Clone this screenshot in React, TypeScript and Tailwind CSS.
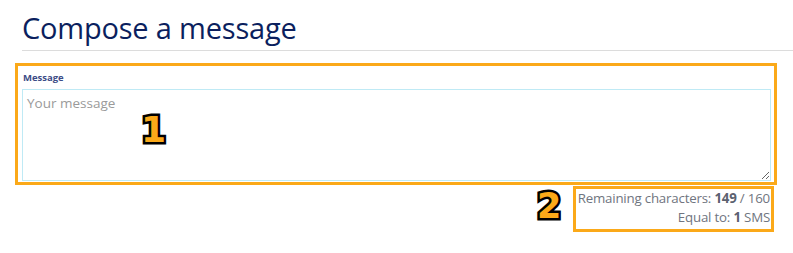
import React from "react";

export default function App() {
  return (
    <div className="relative w-[793px] h-[253px] bg-white font-['Open_Sans',sans-serif] overflow-hidden">
      <div className="pl-[15px] pr-[16px]">
        <div className="ml-[7px] mr-[-16px] border-b border-[#dcdcdc] pt-[8px] pb-[2px]">
          <h1 className="text-[29px] leading-[40px] text-[#0b1f5e] tracking-[-0.2px]">Compose a message</h1>
        </div>
        <div className="mt-[12px] border-[3px] border-[#fba919] pl-[4px] pr-[3px] pt-[5px] pb-[1px] h-[122px] flex flex-col">
          <label className="block text-[9.5px] font-bold text-[#3d4c86] leading-[14px] ml-[1px]">Message</label>
          <textarea
            placeholder="Your message"
            className="mt-[4px] flex-1 w-full border border-[#bfeaf5] px-[4px] py-[3px] text-[13.5px] leading-[20px] placeholder:text-[#9a9a9a] outline-none resize-y"
          />
        </div>
        <div className="flex justify-end">
          <div className="mr-[3px] mt-[1px] border-[3px] border-[#fba919] w-[201px] h-[46px] pr-[1px] flex flex-col items-end text-[13.3px] leading-[19px] tracking-[-0.2px] text-[#707580] pt-0 whitespace-nowrap">
            <div>Remaining characters: <b className="text-[#5c6270]">149</b> / 160</div>
            <div>Equal to: <b className="text-[#5c6270]">1</b> SMS</div>
          </div>
        </div>
      </div>
      <span className="absolute left-[141px] top-[112px] text-[36px] font-black font-['DejaVu_Sans',sans-serif] text-[#fba919] [-webkit-text-stroke:5px_#000] [paint-order:stroke_fill] leading-none">1</span>
      <span className="absolute left-[537px] top-[189px] text-[35px] font-black font-['DejaVu_Sans',sans-serif] text-[#fba919] [-webkit-text-stroke:5px_#000] [paint-order:stroke_fill] leading-none">2</span>
    </div>
  );
}
